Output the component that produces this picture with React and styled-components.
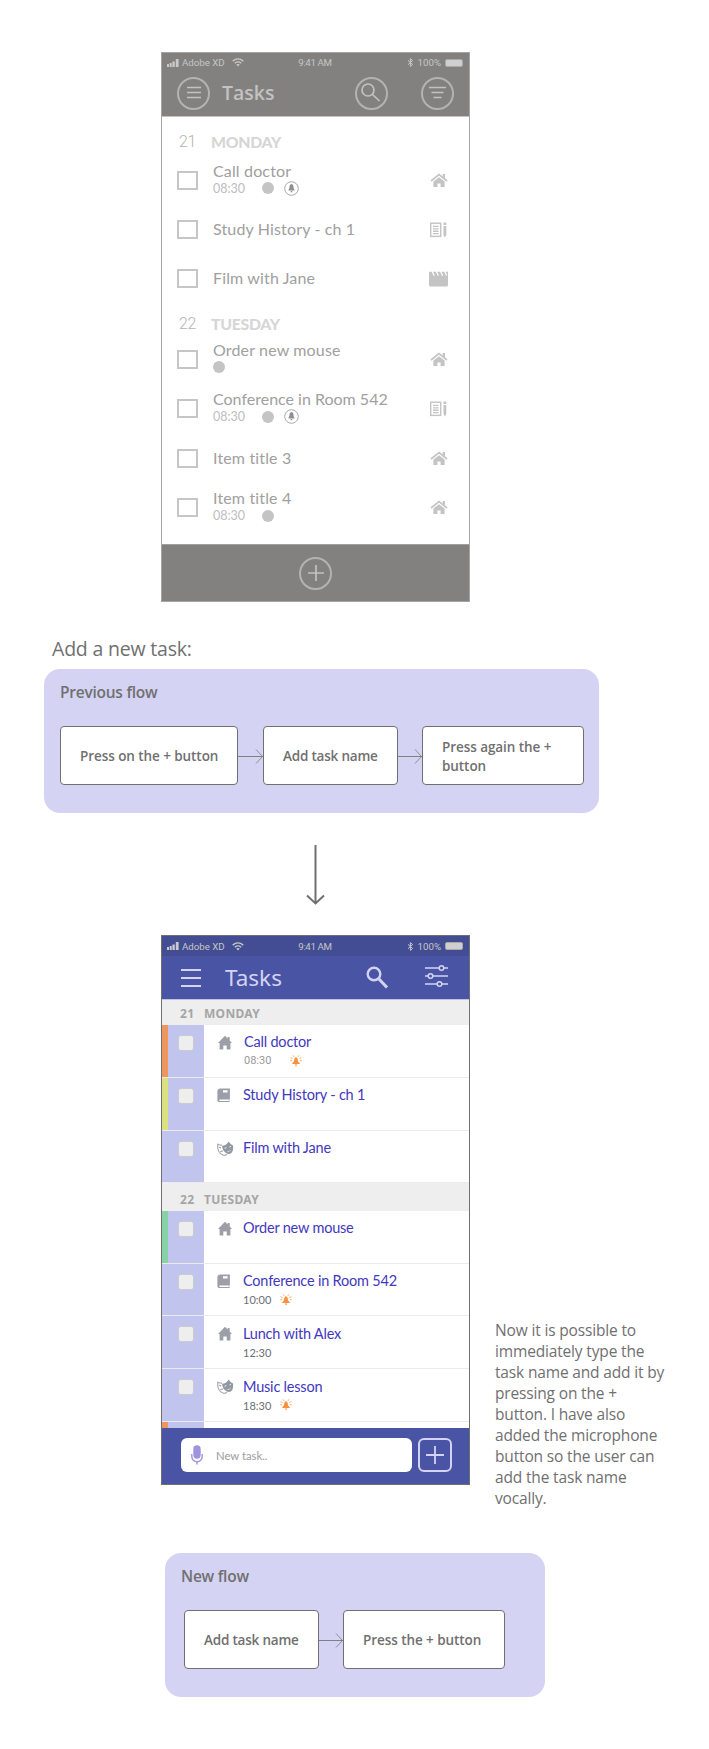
import React from 'react';
import styled, { createGlobalStyle } from 'styled-components';

const Global = createGlobalStyle`
  * { box-sizing: border-box; }
  body { margin: 0; background: #fff; }
`;

const Page = styled.main`
  width: 709px;
  height: 1749px;
  padding-top: 52px;
  overflow: hidden;
  font-family: 'Open Sans', 'Noto Sans', sans-serif;
  color: #707070;
`;

/* ---------- shared phone frame ---------- */
const Phone = styled.section`
  width: 309px;
  height: 550px;
  flex: none;
  display: flex;
  flex-direction: column;
  overflow: hidden;
  background: #fff;
  border: 1px solid ${(p) => p.$edge};
`;

const StatusBar = styled.div`
  height: ${(p) => p.$h}px;
  padding: 0 6px 0 5px;
  display: grid;
  grid-template-columns: 1fr auto 1fr;
  align-items: center;
  background: ${(p) => p.$bg};
  color: #c6c6c6;
  font: 400 9.7px Roboto, sans-serif;
`;

const StatusSide = styled.div`
  display: flex;
  align-items: center;
  justify-content: ${(p) => (p.$end ? 'flex-end' : 'flex-start')};
  gap: ${(p) => p.$gap}px;
`;

const Clock = styled.span`
  letter-spacing: -0.35px;
`;

const Wifi = styled.svg`
  margin-left: 4px;
`;

const Battery = styled.div`
  width: 18px;
  height: 8px;
  border: 1px solid #a9a9a9;
  border-radius: 2px;
  background: #cfcfcf;
`;

function Status({ h, bg }) {
  return (
    <StatusBar $h={h} $bg={bg}>
      <StatusSide $gap={3}>
        <svg width="12" height="8" fill="#c9c9c9">
          <rect x="0" y="5" width="2" height="3" />
          <rect x="2.7" y="4" width="2" height="4" />
          <rect x="5.4" y="2.5" width="2.4" height="5.5" />
          <rect x="8.8" y="0" width="2.8" height="8" />
        </svg>
        <span>Adobe XD</span>
        <Wifi width="12" height="9" viewBox="0 0 12 9" fill="none" stroke="#c9c9c9" strokeWidth="1.4">
          <path d="M.7 3.1Q6-1.3 11.3 3.1M2.8 5.2Q6 2.6 9.2 5.2" />
          <path d="M4.2 6.6Q6 5.3 7.8 6.6L6 8.6z" fill="#c9c9c9" stroke="none" />
        </Wifi>
      </StatusSide>
      <Clock>9:41 AM</Clock>
      <StatusSide $end $gap={4}>
        <svg width="7" height="9" viewBox="0 0 7 9" fill="none" stroke="#c9c9c9" strokeWidth="1">
          <path d="M1 2.4 5.6 6.4 3.4 8.4V.6L5.6 2.6 1 6.6" />
        </svg>
        <span>100%</span>
        <Battery />
      </StatusSide>
    </StatusBar>
  );
}

/* ---------- previous (wireframe) design ---------- */
const OldPhoneWrap = styled.div`
  padding-left: 161px;
`;

const OldHeader = styled.header`
  height: 64px;
  flex: none;
  background: #82817f;
  border-bottom: 1px solid #c4c4c4;
`;

const OldBar = styled.div`
  display: flex;
  align-items: center;
  padding: 2px 15.5px 0 15px;
  height: 40px;
`;

const OldTitle = styled.h1`
  flex: 1;
  margin: -2px 0 0 12px;
  font: 600 19.5px 'Open Sans', sans-serif;
  color: #c2c2c1;
`;

const Ring = styled.div`
  width: 33px;
  height: 33px;
  margin-right: ${(p) => p.$mr || 0}px;
  display: flex;
  align-items: center;
  justify-content: center;
  border: 2px solid #b3b3b2;
  border-radius: 50%;
  svg { display: block; fill: none; stroke: #c2c2c1; stroke-width: 1.7; }
`;

const OldList = styled.div`
  flex: 1;
  padding-top: 10.5px;
`;

const OldDay = styled.div`
  display: flex;
  align-items: center;
  height: ${(p) => p.$h}px;
  padding: ${(p) => p.$pt || 0}px 0 0 17px;
  font: 900 15.8px Lato, sans-serif;
  letter-spacing: -0.3px;
  color: #d6d6d6;
`;

const OldDate = styled.span`
  width: 32px;
  font: 300 16px Roboto, sans-serif;
  letter-spacing: -0.5px;
  color: #b4b4b4;
`;

const OldRow = styled.div`
  display: flex;
  align-items: center;
  height: 49.4px;
  padding: 0 20px 0 15px;
`;

const OldCheck = styled.div`
  width: 21px;
  height: 19px;
  border: 2px solid #c6c6c6;
`;

const OldBody = styled.div`
  flex: 1;
  margin: ${(p) => (p.$tall ? -4 : -1)}px 0 0 15px;
`;

const OldName = styled.div`
  font: 400 16px/20px Lato, sans-serif;
  letter-spacing: ${(p) => (p.$long ? 0 : 0.15)}px;
  color: #a0a0a0;
  white-space: nowrap;
`;

const OldMeta = styled.div`
  display: flex;
  align-items: center;
  height: 15px;
  font: 400 12.5px/15px Lato, sans-serif;
  color: #bdbdbd;
  span { width: 49px; }
  svg { margin-left: 10px; }
`;

const Dot = styled.i`
  width: 12px;
  height: 12px;
  border-radius: 50%;
  background: #c4c4c4;
`;

const Kind = styled.div`
  width: 20px;
  display: flex;
  justify-content: center;
`;

const OldFooter = styled.footer`
  height: 57px;
  flex: none;
  display: flex;
  align-items: center;
  justify-content: center;
  background: #82817f;
  border-top: 1px solid #a0a0a0;
`;

const BellRing = () => (
  <svg width="15" height="15" viewBox="0 0 15 15">
    <circle cx="7.5" cy="7.5" r="6.8" fill="none" stroke="#a8a8a8" strokeWidth="1" />
    <path d="M7.5 3C5.7 3.3 5.5 5 5.4 7L4.3 9.4h6.4L9.6 7C9.5 5 9.3 3.3 7.5 3zM6.7 10h1.6v1.3H6.7z" fill="#8f8f8f" />
  </svg>
);

const OldHome = () => (
  <svg width="18" height="15" viewBox="0 0 18 15" fill="#c4c4c4">
    <path d="M1 8 9 1.6 17 8" fill="none" stroke="#c4c4c4" strokeWidth="1.7" />
    <path d="M12.7 1H15v4.5l-2.3-1.8zM3.4 8.6 9 4.2l5.6 4.4V14h-4v-3.6H7.4V14h-4z" />
  </svg>
);

const OldNotes = () => (
  <svg width="18" height="16" viewBox="0 0 18 16" fill="#c4c4c4">
    <rect x=".7" y="1.2" width="10" height="13.2" fill="none" stroke="#c4c4c4" strokeWidth="1.4" />
    <path d="M3 3.8h5.500v1.300H3zM3 6.200h5.500v1.300H3zM3 8.600h5.500v1.300H3zM3 11h5.500v1.300H3zM13.500 .4h2.800V3h-2.800zM13.500 4h2.800v9l-1.400 2.600L13.500 13z" />
  </svg>
);

const OldFilm = () => (
  <svg width="20" height="16" viewBox="0 0 20 16">
    <path d="M0 .8h19V14a1.600 1.600 0 0 1-1.600 1.600H1.600A1.600 1.600 0 0 1 0 14z" fill="#c4c4c4" />
    <path d="M3 0 5.200 4.800M7.200 0l2.200 4.800M11.400 0l2.200 4.800M15.600 0l2 4.400" stroke="#fff" strokeWidth="1.200" />
  </svg>
);

const oldIcons = { home: OldHome, notes: OldNotes, film: OldFilm };

function OldTask({ name, time, dot, bell, kind }) {
  const Icon = oldIcons[kind];
  return (
    <OldRow>
      <OldCheck />
      <OldBody $tall={dot}>
        <OldName $long={name.length > 20}>{name}</OldName>
        {(time || dot) && (
          <OldMeta>
            {time && <span>{time}</span>}
            {dot && <Dot />}
            {bell && <BellRing />}
          </OldMeta>
        )}
      </OldBody>
      <Kind><Icon /></Kind>
    </OldRow>
  );
}

function OldPhone() {
  return (
    <Phone $edge="#a4a4a4">
      <OldHeader>
        <Status h={19} bg="#82817f" />
        <OldBar>
          <Ring>
            <svg width="16" height="14"><path d="M1 1.500h14M1 6.500h14M1 11.500h14" /></svg>
          </Ring>
          <OldTitle>Tasks</OldTitle>
          <Ring $mr={33}>
            <svg width="20" height="20"><circle cx="7" cy="7" r="6" /><path d="M11.500 11.500l7 6.500" /></svg>
          </Ring>
          <Ring>
            <svg width="17" height="14"><path d="M0 1.500h17M2.500 6.500h12M4.500 11.500h8" /></svg>
          </Ring>
        </OldBar>
      </OldHeader>
      <OldList>
        <OldDay $h={28}><OldDate>21</OldDate>MONDAY</OldDay>
        <OldTask name="Call doctor" time="08:30" dot bell kind="home" />
        <OldTask name="Study History - ch 1" kind="notes" />
        <OldTask name="Film with Jane" kind="film" />
        <OldDay $h={31} $pt={9}><OldDate>22</OldDate>TUESDAY</OldDay>
        <OldTask name="Order new mouse" dot kind="home" />
        <OldTask name="Conference in Room 542" time="08:30" dot bell kind="notes" />
        <OldTask name="Item title 3" kind="home" />
        <OldTask name="Item title 4" time="08:30" dot kind="home" />
      </OldList>
      <OldFooter>
        <Ring>
          <svg width="16" height="16"><path d="M8 0v16M0 8h16" /></svg>
        </Ring>
      </OldFooter>
    </Phone>
  );
}

/* ---------- flow panels ---------- */
const Heading = styled.h2`
  margin: 33px 0 0 52px;
  height: 34px;
  font: 400 19.5px/28px 'Open Sans', sans-serif;
  letter-spacing: -0.2px;
`;

const FlowPanel = styled.section`
  width: ${(p) => p.$w}px;
  height: 144px;
  margin: ${(p) => p.$mt || 0}px 0 0 ${(p) => p.$ml}px;
  padding: 13px 0 0 16px;
  border-radius: 16px;
  background: #d5d3f3;
`;

const FlowTitle = styled.h3`
  margin: 0;
  height: 44px;
  font: 600 15.5px/21px 'Open Sans', sans-serif;
  letter-spacing: -0.25px;
`;

const Steps = styled.div`
  display: flex;
  align-items: center;
  padding-left: ${(p) => p.$pl || 0}px;
`;

const Step = styled.div`
  width: ${(p) => p.$w}px;
  height: 59px;
  padding: 2px 0 0 19px;
  display: flex;
  align-items: center;
  background: #fff;
  border: 1px solid #707070;
  border-radius: 4px;
  font: 600 13.5px/19px 'Open Sans', sans-serif;
  letter-spacing: ${(p) => p.$ls ?? -0.07}px;
`;

const StepArrow = ({ w }) => (
  <svg width={w} height="16" fill="none" stroke="#808080">
    <path d={`M0 8.500H${w}`} />
    <path d={`M${w - 7} 1.500L${w - 0.500} 8.500L${w - 7} 15.500`} strokeWidth=".8" />
  </svg>
);

const Down = styled.div`
  height: 122px;
  padding: 32px 0 0 306px;
  svg { display: block; }
`;

/* ---------- new design ---------- */
const NewRowWrap = styled.div`
  display: flex;
  align-items: flex-start;
  height: 574px;
  padding-left: 161px;
`;

const Note = styled.p`
  width: 180px;
  margin: 385px 0 0 25px;
  font: 400 15.5px/21px 'Open Sans', sans-serif;
  letter-spacing: -0.16px;
`;

const NewBar = styled.header`
  height: 44px;
  flex: none;
  display: flex;
  align-items: center;
  padding: 0 21px 0 19px;
  background: #4a54a5;
  border-bottom: 1px solid #c0c2ea;
  svg { display: block; fill: none; stroke: #d5d3f3; }
`;

const NewTitle = styled.h1`
  flex: 1;
  margin: 0 0 0 24px;
  font: 400 22.5px 'Noto Sans', sans-serif;
  color: #d5d3f3;
`;

const SearchGlyph = styled.svg`
  margin: 1px 36px 0 0;
`;

const SlidersGlyph = styled.svg`
  margin-top: -4px;
`;

const NewList = styled.div`
  flex: 1;
  min-height: 0;
  overflow: hidden;
`;

const NewDay = styled.div`
  height: ${(p) => p.$h}px;
  padding: ${(p) => p.$pt}px 0 0 18px;
  display: flex;
  background: #eee;
  color: #a5a5a5;
  font: 700 12px/16px 'Noto Sans', sans-serif;
  letter-spacing: 0.3px;
  span { width: 24px; }
`;

const NewRow = styled.div`
  height: 52.8px;
  display: flex;
  border-bottom: 1px solid #ebebee;
`;

const Strip = styled.div`
  width: 42px;
  padding: 10px 0 0 10px;
  background: #c1c4ed;
  border-left: 6px solid ${(p) => p.$tag || '#c1c4ed'};
`;

const NewCheck = styled.div`
  width: 16px;
  height: 16px;
  background: #eee;
  border: 1px solid #cbcbcf;
  border-radius: 3px;
`;

const NewKind = styled.div`
  width: ${(p) => (p.$soft ? 40 : 39)}px;
  padding: 9px 0 0 13px;
`;

const NewName = styled.div`
  padding-top: ${(p) => (p.$soft ? 7 : 7.5)}px;
  font: 400 14.5px/20px Lato, sans-serif;
  letter-spacing: -0.2px;
  color: #4338bd;
  white-space: nowrap;
`;

const NewMeta = styled.div`
  display: flex;
  align-items: center;
  margin-top: 1px;
  height: 15px;
  font: 400 11px/15px ${(p) => (p.$soft ? 'Roboto' : 'Lato')}, sans-serif;
  color: ${(p) => (p.$soft ? '#9a9a9a' : '#6b6e75')};
  span { width: ${(p) => (p.$soft ? 46 : 37)}px; }
`;

const NewFooter = styled.footer`
  height: 56px;
  flex: none;
  display: flex;
  align-items: center;
  gap: 6px;
  padding: 0 17px 2px 19px;
  background: #4a54a5;
`;

const Field = styled.div`
  width: 231px;
  height: 34px;
  display: flex;
  align-items: center;
  gap: 13px;
  padding-left: 10px;
  border-radius: 6px;
  background: #fff;
  color: #9c9c9c;
  font: 400 11.3px Lato, sans-serif;
`;

const AddButton = styled.div`
  width: 34px;
  height: 34px;
  display: flex;
  align-items: center;
  justify-content: center;
  border: 2px solid #d5d3f3;
  border-radius: 6px;
`;

const NewHome = () => (
  <svg width="16" height="16" viewBox="0 0 16 16" fill="#9c9fa8">
    <path d="M8 .8 10.700 3.600V2h2v3.600l2.300 2.500H13.400V14.500H9.700V10.500H6.300v4H2.600V8.100H1z" />
  </svg>
);

const NewBook = () => (
  <svg width="14" height="16" viewBox="0 0 14 16">
    <path d="M3.200 .6h9.700v10.200c-.8.8-.8 2.400 0 3.200H3C1.600 14.500.4 13.500.4 12V3.400C.4 1.700 1.600 .6 3.200 .6z" fill="#9c9fa8" />
    <path d="M6 2.200h4.600v2.200H6zM3 11.600h8.800v1.500H3c-1.100 0-1.100-1.500 0-1.500z" fill="#fff" />
  </svg>
);

const NewMasks = () => (
  <svg width="17" height="16" viewBox="0 0 17 16">
    <path d="M5 4.200C3.500 4.200 2 3.800.8 3.200.2 8 2 12.800 6.300 14.200c1.200.2 2.600-.2 3.600-1" fill="none" stroke="#a5a7af" strokeWidth="1.200" />
    <path d="M2 6.300l2 .6M3.300 11c.8-.9 1.700-1.200 2.800-1" stroke="#9c9fa8" strokeWidth="1.100" fill="none" />
    <path d="M5 4.800C7.800 4.800 10 3.400 11.800.6c1 2 2.400 3.200 4.200 3.800.6 4.600-.8 8.200-4 8.600C8.500 13 5.500 9.500 5 4.800z" fill="#9298a2" />
    <path d="M7.600 7.300l1.800-.7M12.500 6l1.500-.6" stroke="#fff" strokeWidth=".9" />
    <path d="M9.200 10c2 .5 3.800 0 4.800-1.500-.5 2-3 3-4.800 1.500z" fill="#fff" />
  </svg>
);

const Alarm = () => (
  <svg width="12" height="12" viewBox="0 0 12 12" fill="#f9913f">
    <path d="M6 2.200C4.300 2.600 4.100 4.200 4 6.300L1.800 9h8.400L8 6.300C7.900 4.200 7.700 2.600 6 2.200zM4.800 9.600h2.400L6 11.500z" />
    <path d="M.6 2.600l1.900.9M11.400 2.600l-1.900.9M3.200.4l.8 1.400M8.800.4L8 1.800M.3 5.700h1.700M11.700 5.700H10" stroke="#f9a158" strokeWidth=".9" />
  </svg>
);

const newIcons = { home: NewHome, book: NewBook, masks: NewMasks };

function NewTask({ name, time, alarm, kind, tag, soft }) {
  const Icon = newIcons[kind];
  return (
    <NewRow>
      <Strip $tag={tag}><NewCheck /></Strip>
      <NewKind $soft={soft}><Icon /></NewKind>
      <div>
        <NewName $soft={soft}>{name}</NewName>
        {time && (
          <NewMeta $soft={soft}>
            <span>{time}</span>
            {alarm && <Alarm />}
          </NewMeta>
        )}
      </div>
    </NewRow>
  );
}

function NewPhone() {
  return (
    <Phone $edge="#707070">
      <Status h={20} bg="#434d93" />
      <NewBar>
        <svg width="20" height="20" strokeWidth="2"><path d="M0 2h20M0 10h20M0 18h20" /></svg>
        <NewTitle>Tasks</NewTitle>
        <SearchGlyph width="23" height="24" strokeWidth="2.400">
          <circle cx="8" cy="8" r="6.300" /><path d="M12.500 12.500l8.500 9" strokeWidth="3" />
        </SearchGlyph>
        <SlidersGlyph width="23" height="24" strokeWidth="1.500">
          <path d="M0 4h14M19 4h4M0 12h3M8 12h15M0 20h12M17 20h6" />
          <circle cx="16.500" cy="4" r="2.300" /><circle cx="5.500" cy="12" r="2.300" /><circle cx="14.500" cy="20" r="2.300" />
        </SlidersGlyph>
      </NewBar>
      <NewList>
        <NewDay $h={25} $pt={6}><span>21</span>MONDAY</NewDay>
        <NewTask name="Call doctor" time="08:30" alarm soft kind="home" tag="#ef965f" />
        <NewTask name="Study History - ch 1" kind="book" tag="#dde07e" />
        <NewTask name="Film with Jane" kind="masks" />
        <NewDay $h={27.5} $pt={9}><span>22</span>TUESDAY</NewDay>
        <NewTask name="Order new mouse" kind="home" tag="#88d3a5" />
        <NewTask name="Conference in Room 542" time="10:00" alarm kind="book" />
        <NewTask name="Lunch with Alex" time="12:30" kind="home" />
        <NewTask name="Music lesson" time="18:30" alarm kind="masks" />
        <NewRow><Strip $tag="#ef965f" /></NewRow>
      </NewList>
      <NewFooter>
        <Field>
          <svg width="12" height="20" viewBox="0 0 12 20" fill="none" stroke="#a193dd" strokeWidth="1.400">
            <rect x="3" y="1" width="6" height="12" rx="3" fill="#a193dd" />
            <path d="M.8 9v2.500a5.200 5.200 0 0 0 10.400 0V9M6 17v2.500" />
          </svg>
          New task..
        </Field>
        <AddButton>
          <svg width="18" height="18" stroke="#d5d3f3" strokeWidth="1.800"><path d="M9 0v18M0 9h18" /></svg>
        </AddButton>
      </NewFooter>
    </Phone>
  );
}

export default function App() {
  return (
    <Page>
      <Global />
      <OldPhoneWrap><OldPhone /></OldPhoneWrap>
      <Heading>Add a new task:</Heading>
      <FlowPanel $w={555} $ml={44}>
        <FlowTitle>Previous flow</FlowTitle>
        <Steps>
          <Step $w={178}>Press on the + button</Step>
          <StepArrow w={25} />
          <Step $w={135} $ls={-0.2}>Add task name</Step>
          <StepArrow w={24} />
          <Step $w={162}>Press again the +<br />button</Step>
        </Steps>
      </FlowPanel>
      <Down>
        <svg width="19" height="60" fill="none" stroke="#707070" strokeWidth="2">
          <path d="M9.500 0v58M1 50.500l8.500 8L18 50.500" />
        </svg>
      </Down>
      <NewRowWrap>
        <NewPhone />
        <Note>
          Now it is possible to<br />immediately type the<br />task name and add it by<br />pressing on the +<br />
          button. I have also<br />added the microphone<br />button so the user can<br />add the task name<br />vocally.
        </Note>
      </NewRowWrap>
      <FlowPanel $w={380} $ml={165} $mt={44}>
        <FlowTitle>New flow</FlowTitle>
        <Steps $pl={3}>
          <Step $w={135} $ls={-0.2}>Add task name</Step>
          <StepArrow w={24} />
          <Step $w={162}>Press the + button</Step>
        </Steps>
      </FlowPanel>
    </Page>
  );
}
